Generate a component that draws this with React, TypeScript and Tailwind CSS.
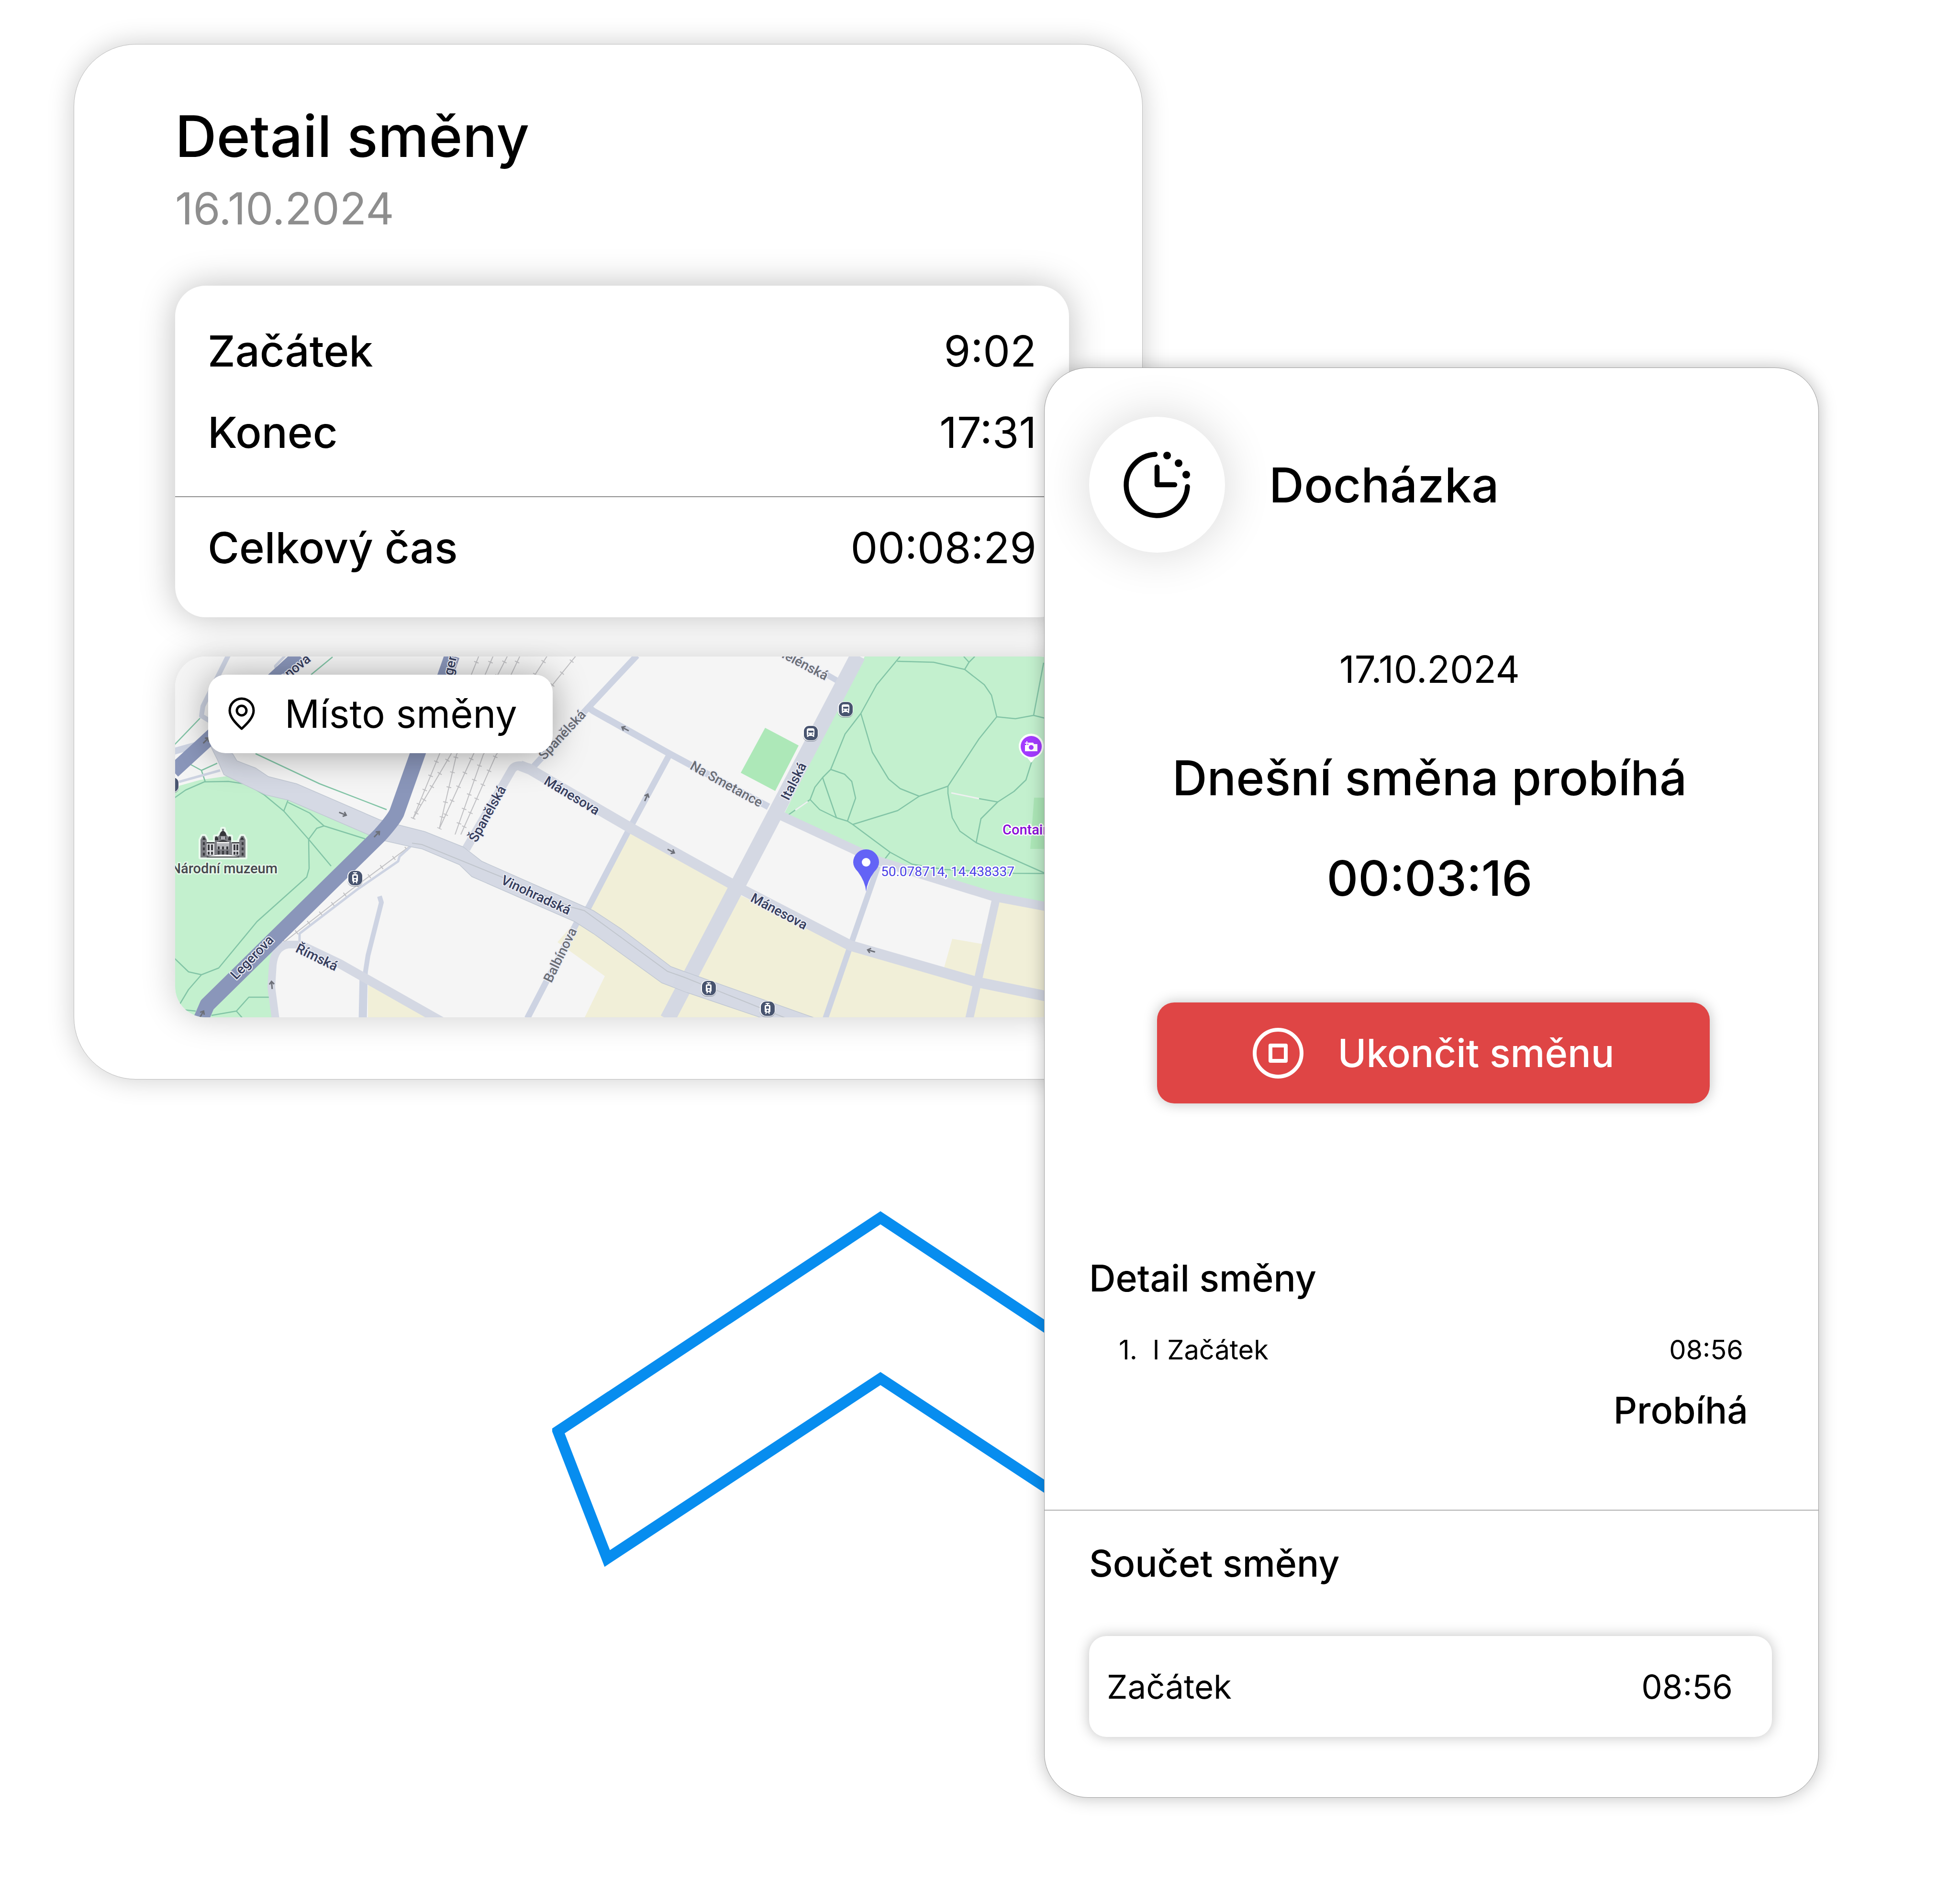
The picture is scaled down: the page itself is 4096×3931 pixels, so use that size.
import React from "react";

const greenPaths = [
  "M-2 296 22 279 61 262 111 261 150 267 186 289 227 323 279 382 280 443 275 461 171 554 91 651 55 665 28 659 -2 630",
  "M236 300 227 323",
  "M236 305 281 327 311 354 397 381",
  "M311 354 296 359 279 382 326 438",
  "M55 665 28 696 4 736",
  "M76 750 128 741 154 712 201 712M128 741 141 756M-2 736 43 741",
  "M168 203 302 266 442 320M284 38 329 1M-2 185 52 129",
  "M31 225 55 238 88 223M55 238 63 262",
  "M1515 0 1466 59 1433 119 1400 162 1370 236 1353 253 1337 273 1327 299 1347 320 1382 337 1405 344 1416 351 1494 409 1540 434 1607 445 1753 453 1870 454",
  "M1509 10 1585 12 1650 27 1691 59 1706 81 1717 126 1756 130 1794 123 1818 129 1870 140",
  "M1650 27 1659 12 1671 0M1659 12 1648 0M1794 123 1815 13",
  "M1433 119 1457 200 1491 256 1515 276 1555 292 1615 271 1680 172 1717 126",
  "M1555 292 1510 322 1416 351",
  "M1370 236 1399 246 1414 261 1422 296 1405 344M1353 253 1382 337",
  "M1327 299 1280 332",
  "M1615 271 1615 286 1624 337 1640 365 1674 389 1818 453",
  "M1674 389 1684 339 1719 304 1753 282 1778 258 1790 220",
  "M1680 297 1719 304M1494 409 1481 426",
];

const railPaths = [
  "M635 -2 552 205 497 339",
  "M665 -2 576 205 497 339",
  "M695 -2 588 205 552 360",
  "M721 -2 623 205 552 360",
  "M778 -2 644 205 585 372",
  "M838 -2 671 205 597 372",
  "M495 393 367 488 221 602",
];

const streets: { d: string; width: number }[] = [
  { d: "M861 104 874 114 1033 203 1240 314", width: 14 },
  { d: "M1033 205 950 359 864 524 838 559 736 756", width: 13 },
  { d: "M748 231 861 109 965 -2", width: 13 },
  { d: "M1355 34 1388 53", width: 12 },
  { d: "M1469 438 1411 605 1359 756", width: 12 },
  { d: "M427 501 431 514 403 625 396 670", width: 10 },
  { d: "M394 660 392 760", width: 17 },
  { d: "M492 397 469 418 466 428 379 488 260 579 260 602", width: 5 },
  { d: "M111 -2 58 104 55 124 73 135", width: 10 },
  { d: "M-2 198 70 178", width: 14 },
  { d: "M8 262 94 238", width: 5 },
  { d: "M212 30 209 20 230 -2", width: 5 },
];

const avenues: { d: string; width: number }[] = [
  { d: "M608 402 704 236Q709 228 721 228L742 233", width: 18 },
  { d: "M721 228 742 236 879 316 953 359 1173 481 1411 604 1674 680 1870 720", width: 22 },
  { d: "M1265 332 1472 428 1711 502 1870 532", width: 19 },
  { d: "M1715 509 1659 760", width: 17 },
  { d: "M210 758 201 691 204 645Q208 606 236 602L260 602 344 642", width: 16 },
  { d: "M260 602 344 642 570 770", width: 19 },
  { d: "M1427 -2 1029 758", width: 32 },
];

const streetLabels: { text: string; x: number; y: number; angle: number; minor?: boolean }[] = [
  { text: "Mánesova", x: 829, y: 291, angle: 31 },
  { text: "Mánesova", x: 1262, y: 533, angle: 28 },
  { text: "Španělská", x: 809, y: 164, angle: -47, minor: true },
  { text: "Španělská", x: 653, y: 329, angle: -61 },
  { text: "Vinohradská", x: 754, y: 499, angle: 25 },
  { text: "Legerova", x: 161, y: 629, angle: -46 },
  { text: "Legerova", x: 577, y: 12, angle: -78 },
  { text: "Wilsonova", x: 229, y: 42, angle: -39 },
  { text: "Římská", x: 296, y: 629, angle: 26 },
  { text: "Balbínova", x: 805, y: 624, angle: -64, minor: true },
  { text: "Na Smetance", x: 1152, y: 267, angle: 29, minor: true },
  { text: "Italská", x: 1293, y: 261, angle: -63 },
  { text: "Helénská", x: 1311, y: 15, angle: 28, minor: true },
];

const arrows = [
  [351, 329, 22],
  [422, 371, -46],
  [202, 686, -95],
  [56, 747, -60],
  [65, 175, -45],
  [940, 151, 208],
  [985, 294, -66],
  [1037, 407, 28],
  [1454, 615, 196],
];

const Stop: React.FC<{ x: number; y: number; tram?: boolean }> = ({ x, y, tram }) => (
  <g transform={`translate(${x} ${y})`}>
    <rect x="-16" y="-14" width="32" height="32" rx="12" fill="#6f7788" opacity="0.5" />
    <rect x="-16" y="-16" width="32" height="32" rx="12" fill="#fff" />
    <rect x="-14" y="-15" width="29" height="30" rx="11" fill="#48546f" />
    {tram ? (
      <>
        <path d="M-4 -11H4M0 -11V-7M-4 11-2 7M4 11 2 7" stroke="#fff" strokeWidth="2" />
        <rect x="-6" y="-8" width="12" height="16" rx="3" fill="#fff" />
        <rect x="-3" y="-5" width="6" height="5" fill="#48546f" />
        <circle cy="4" r="2" fill="#48546f" />
      </>
    ) : (
      <>
        <rect x="-8" y="-10" width="16" height="16" rx="4" fill="#fff" />
        <path d="M-6 5V8M6 5V8" stroke="#fff" strokeWidth="3" />
        <rect x="-5" y="-5" width="11" height="4" fill="#48546f" />
        <circle cx="-4" cy="2" r="1.5" fill="#48546f" />
        <circle cx="4" cy="2" r="1.5" fill="#48546f" />
      </>
    )}
  </g>
);

const Museum: React.FC = () => (
  <g>
    <path
      d="M53 420V383L57 375H62L66 383V388H83V376H90L93 372Q94 367 98 365V360H102V365Q106 367 107 372L110 376H117V388H134V383L138 375H143L147 383V420Z"
      fill="#7c7d83"
      stroke="#e9f9ed"
      strokeWidth="8"
      strokeLinejoin="round"
      paintOrder="stroke"
    />
    <path d="M87 388H113V415H87Z" fill="#b4b5ba" />
    <path d="M87 403H113V414H87Z" fill="#7c7d83" />
    <path d="M66 391H82V415H66ZM119 391H134V415H119Z" fill="#dcdde0" />
    <path
      d="M93 375Q94 367 98 365H102Q106 367 107 375ZM83 384V380L86 375 90 380V384ZM111 384V380L114 375 117 380V384ZM57 383 59 378H61L64 383ZM136 383 139 378H141L144 383ZM90 387Q100 380 110 387ZM66 388H82V390H66ZM119 388H134V390H119Z"
      fill="#35363a"
    />
    <path d="M92 376H108V382H92Z" fill="#a9aab0" />
    <path d="M94 376V382M106 376V382" stroke="#35363a" strokeWidth="2" />
    <path d="M87 389H113" stroke="#fff" strokeWidth="2" />
    <path
      d="M91 397V403M100 397V403M109 397V403M91 406V414M100 406V414M109 406V414M70 393V405M77 393V405M124 393V405M130 393V405M70 408V414M77 408V414M124 408V414M130 408V414M60 388V394M60 399V405M60 410V416M141 388V394M141 399V405M141 410V416"
      stroke="#3b3c41"
      strokeWidth="4"
    />
    <path d="M66 419H134" stroke="#35363a" strokeWidth="2" />
    <path d="M68 418Q100 410 132 418Z" fill="#fff" />
  </g>
);

const ShiftMap: React.FC = () => (
  <svg
    className="col-start-1 row-start-1 h-[754px] w-full rounded-[64px] font-[Roboto,sans-serif] shadow-[0_0_72px_rgba(0,0,0,0.2)]"
    viewBox="0 0 1870 754"
    preserveAspectRatio="xMinYMin slice"
    role="img"
    aria-label="Mapa místa směny"
  >
    <rect width="1870" height="754" fill="#f5f5f5" />

    {/* parks */}
    <g fill="#c3f0ce">
      <path d="M-2 273 52 258 108 250 183 286 236 300 415 372 216 589 219 610 198 645 204 756H-2Z" />
      <path d="M1442 -2 1271 332 1436 402 1485 428 1717 496 1870 524V-2Z" />
    </g>
    <g fill="#ade8b8">
      <path d="M1233 149 1303 186 1254 281 1182 243Z" />
      <path d="M1795 295H1870V402H1787Z" />
    </g>

    {/* built-up blocks */}
    <g fill="#f1efd8">
      <path d="M947 362 1167 478 1069 665 1026 650 864 524Z" />
      <path d="M832 559 799 597 898 668 855 756H1030L1051 691 874 559Z" />
      <path d="M403 680V756H558Z" />
      <path d="M1179 498 1411 608 1671 680 1870 720V756H1048L1084 670Z" />
      <path d="M1723 510 1870 534V716L1686 678Z" />
      <path d="M1624 590 1688 601 1673 674 1607 650Z" />
    </g>

    <g fill="none" stroke="#82c4a6" strokeWidth="2.5" strokeLinejoin="round">
      {greenPaths.map((d) => (
        <path key={d} d={d} />
      ))}
    </g>
    <path d="M1622 285 1680 297M1322 303 1296 321" stroke="#eef0f0" strokeWidth="3" />

    <g fill="none" stroke="#c0c0c3">
      {railPaths.map((d) => (
        <React.Fragment key={d}>
          <path d={d} strokeWidth="2" />
          <path d={d} strokeWidth="10" strokeDasharray="2 30" strokeDashoffset="-14" />
        </React.Fragment>
      ))}
    </g>

    {/* roads, from the narrowest to the main ones */}
    <g fill="none" stroke="#cdd3e2" strokeLinejoin="round">
      {streets.map(({ d, width }) => (
        <path key={d} d={d} strokeWidth={width} />
      ))}
    </g>
    <g fill="none" stroke="#d4d8e3" strokeLinejoin="round">
      {avenues.map(({ d, width }) => (
        <path key={d} d={d} strokeWidth={width} />
      ))}
    </g>
    <path
      d="M120 203 129 218 168 233 195 251 254 266 427 341 463 351 522 366 602 398 614 407 641 428 858 524 874 531 932 569 1036 648 1063 658 1094 669 1344 758H1234L1072 703 1017 682 874 579 835 554 620 460 594 435 516 402 495 398 433 384 403 372 236 300 189 289 141 266 102 247 88 215 73 185Z"
      fill="#d5d9e4"
      stroke="#c1c8d3"
      strokeWidth="1.5"
    />
    <path d="M1063 668 1076 700 1050 690ZM1048 660 1094 671 1070 702 1040 690Z" fill="#d4d8e3" />
    <path
      d="M495 390 516 393 683 461 829 524 855 531 932 587 1029 658 1063 670 1277 756"
      fill="none"
      stroke="#c0c5cc"
      strokeWidth="2"
    />
    <g fill="none" stroke="#8a96ba" strokeLinejoin="round">
      <path d="M579 -2 507 203 463 327Q455 343 427 374L67 728 54 758" strokeWidth="32" />
      <path d="M260 -2 70 172 -4 240" strokeWidth="30" />
    </g>

    <g stroke="#6d7078" strokeWidth="3" fill="none">
      {arrows.map(([x, y, angle]) => (
        <path
          key={`${x}-${y}`}
          d="M-9 0H7M1 -5 7 0 1 5"
          transform={`translate(${x} ${y}) rotate(${angle})`}
        />
      ))}
    </g>

    <g
      fontSize="28"
      fontWeight="500"
      textAnchor="middle"
      stroke="#eceef5"
      strokeWidth="4"
      strokeLinejoin="round"
      paintOrder="stroke"
    >
      {streetLabels.map(({ text, x, y, angle, minor }) => (
        <text
          key={`${text}-${x}`}
          fill={minor ? "#6a6d76" : "#353c5c"}
          transform={`translate(${x} ${y}) rotate(${angle})`}
          dy="9"
        >
          {text}
        </text>
      ))}
    </g>

    <Stop x={1401} y={110} />
    <Stop x={1328} y={160} />
    <Stop x={376} y={463} tram />
    <Stop x={1115} y={693} tram />
    <Stop x={1238} y={736} tram />
    <Stop x={-8} y={268} tram />

    <Museum />
    <g fontSize="29" strokeLinejoin="round" paintOrder="stroke" strokeWidth="5" stroke="#fff">
      <text x="214" y="453" textAnchor="end" fill="#45484d" fontWeight="500" stroke="#e6f8ea">
        Národní muzeum
      </text>
      <text x="1729" y="372" fill="#8a0fd8" fontWeight="500">
        Containall
      </text>
      <text x="1475" y="459" fill="#4a42e4" fontSize="28">
        50.078714, 14.438337
      </text>
    </g>

    <g transform="translate(1789 188)">
      <path d="M0 34 -8 24A26 26 0 1 1 8 24Z" fill="#fff" />
      <circle r="22" fill="#a33bff" />
      <path d="M-13 -3H-6V-8H4L6 -5H13V10H-13Z" fill="#fff" />
      <path d="M-9 -11V-3M-13 -7H-5" stroke="#fff" strokeWidth="2" />
      <circle cy="2" r="5" fill="#a33bff" />
    </g>

    <path
      d="M1444 491Q1442 470 1427 450Q1417 440 1417 430A27 27 0 0 1 1471 430Q1471 440 1461 450Q1446 470 1444 491Z"
      fill="#6363f6"
    />
    <circle cx="1444" cy="430" r="9" fill="#fff" />
  </svg>
);

const PinIcon: React.FC = () => (
  <svg className="h-[70px] w-[56px]" viewBox="0 0 56 70" fill="none" stroke="#000" strokeWidth="5" aria-hidden="true">
    <path d="M28 66C14 53 3 41 3 28A25 25 0 0 1 53 28C53 41 42 53 28 66Z" strokeLinejoin="round" />
    <circle cx="28" cy="28" r="10" />
  </svg>
);

const ClockIcon: React.FC = () => (
  <svg className="size-[140px]" viewBox="0 0 140 140" fill="none" aria-hidden="true">
    <path
      d="M66 6.5A64 64 0 1 0 133.5 74"
      stroke="#000"
      strokeWidth="10.5"
      strokeLinecap="round"
    />
    <path d="M70 33V70H107" stroke="#000" strokeWidth="10.5" strokeLinecap="round" strokeLinejoin="round" />
    <g fill="#000">
      <circle cx="91" cy="9" r="8" />
      <circle cx="115" cy="25" r="8" />
      <circle cx="131" cy="49" r="8" />
    </g>
  </svg>
);

const StopIcon: React.FC = () => (
  <svg className="size-[106px]" viewBox="0 0 106 106" fill="none" stroke="#fff" strokeWidth="8" aria-hidden="true">
    <circle cx="53" cy="53" r="49" />
    <rect x="37" y="37" width="32" height="32" strokeLinejoin="round" />
  </svg>
);

const ShiftRow: React.FC<{ label: string; value: string }> = ({ label, value }) => (
  <div className="flex justify-between px-[68px] text-[90px] leading-[110px]">
    <dt className="font-medium">{label}</dt>
    <dd>{value}</dd>
  </div>
);

const ShiftDetailCard: React.FC = () => (
  <section className="z-10 col-start-1 col-end-3 row-start-1 mt-[92px] self-start rounded-[130px] border border-[#bcbcbc] bg-white pt-[132px] pr-[153px] pb-[129px] pl-[211px] shadow-[0_0_56px_rgba(0,0,0,0.2)]">
    <h1 className="text-[120px] leading-[120px] font-medium">Detail směny</h1>
    <p className="mt-[36px] text-[92px] leading-[110px] text-[#8e8e8e]">16.10.2024</p>

    <dl className="mt-[106px] rounded-[64px] bg-white shadow-[0_0_72px_rgba(0,0,0,0.26)]">
      <div className="flex flex-col gap-[60px] border-b-2 border-[#8e8e8e] pt-[82px] pb-[78px]">
        <ShiftRow label="Začátek" value="9:02" />
        <ShiftRow label="Konec" value="17:31" />
      </div>
      <div className="pt-[51px] pb-[90px]">
        <ShiftRow label="Celkový čas" value="00:08:29" />
      </div>
    </dl>

    <div className="mt-[82px] grid">
      <ShiftMap />
      <div className="z-10 col-start-1 row-start-1 mt-[38px] ml-[69px] flex h-[164px] items-center gap-[62px] self-start justify-self-start rounded-[36px] bg-white pr-[74px] pl-[42px] shadow-[0_4px_72px_rgba(0,0,0,0.35)]">
        <PinIcon />
        <span className="text-[81px] leading-[100px]">Místo směny</span>
      </div>
    </div>
  </section>
);

const AttendanceCard: React.FC = () => (
  <section className="z-20 col-start-2 col-end-4 row-start-1 mt-[768px] self-start rounded-[92px] border border-[#9c9c9c] bg-white pt-[102px] pb-[126px] shadow-[0_0_36px_rgba(0,0,0,0.26)]">
    <header className="flex items-center gap-[92px] px-[93px]">
      <div className="flex size-[284px] items-center justify-center rounded-full bg-white shadow-[0_0_100px_rgba(0,0,0,0.16)]">
        <ClockIcon />
      </div>
      <h2 className="text-[101px] leading-[120px] font-medium">Docházka</h2>
    </header>

    <div className="mt-[196px] pr-[8px] text-center">
      <p className="text-[78px] leading-[96px]">17.10.2024</p>
      <p className="mt-[118px] text-[101px] leading-[120px] font-medium">Dnešní směna probíhá</p>
      <p className="mt-[90px] text-[102px] leading-[120px] font-medium">00:03:16</p>
    </div>

    <div className="mt-[200px] flex justify-center pl-[8px]">
      <button
        type="button"
        className="flex h-[211px] w-[1155px] items-center justify-center gap-[72px] rounded-[36px] bg-[#df4545] text-[81px] leading-[96px] font-medium text-white shadow-[0_0_28px_rgba(0,0,0,0.25)]"
      >
        <StopIcon />
        Ukončit směnu
      </button>
    </div>

    <div className="mt-[319px] px-[93px]">
      <h3 className="text-[77px] leading-[92px] font-medium">Detail směny</h3>
      <div className="mt-[70px] flex justify-between pr-[64px] pl-[62px] text-[56px] leading-[68px]">
        <span>1.&nbsp; I Začátek</span>
        <time>08:56</time>
      </div>
      <p className="mt-[46px] pr-[54px] text-right text-[77px] leading-[92px] font-medium">Probíhá</p>
    </div>

    <div className="mt-[162px] border-t-2 border-[#b0b0b0] pr-[97px] pl-[93px] pt-[64px]">
      <h3 className="text-[77px] leading-[92px] font-medium">Součet směny</h3>
      <div className="mt-[106px] flex h-[211px] items-center justify-between rounded-[36px] bg-white pr-[82px] pl-[37px] text-[69px] leading-[84px] shadow-[0_0_28px_rgba(0,0,0,0.25)]">
        <span>Začátek</span>
        <time>08:56</time>
      </div>
    </div>
  </section>
);

const App: React.FC = () => (
  <main className="grid min-h-screen grid-cols-[2028fr_206fr_1413fr] bg-white pr-[295px] pb-[172px] pl-[154px] font-[Inter,sans-serif] text-black">
    <svg
      className="col-start-1 col-end-4 row-start-1 mt-[2500px] ml-[1000px] h-[800px] w-[1400px] self-start"
      viewBox="1154 2500 1400 800"
      fill="none"
      stroke="#078def"
      strokeWidth="23"
      aria-hidden="true"
    >
      <path d="M1166 2991 1840 2545 2514 2991 2412 3257 1840 2881 1269 3257Z" />
    </svg>
    <ShiftDetailCard />
    <AttendanceCard />
  </main>
);

export default App;
